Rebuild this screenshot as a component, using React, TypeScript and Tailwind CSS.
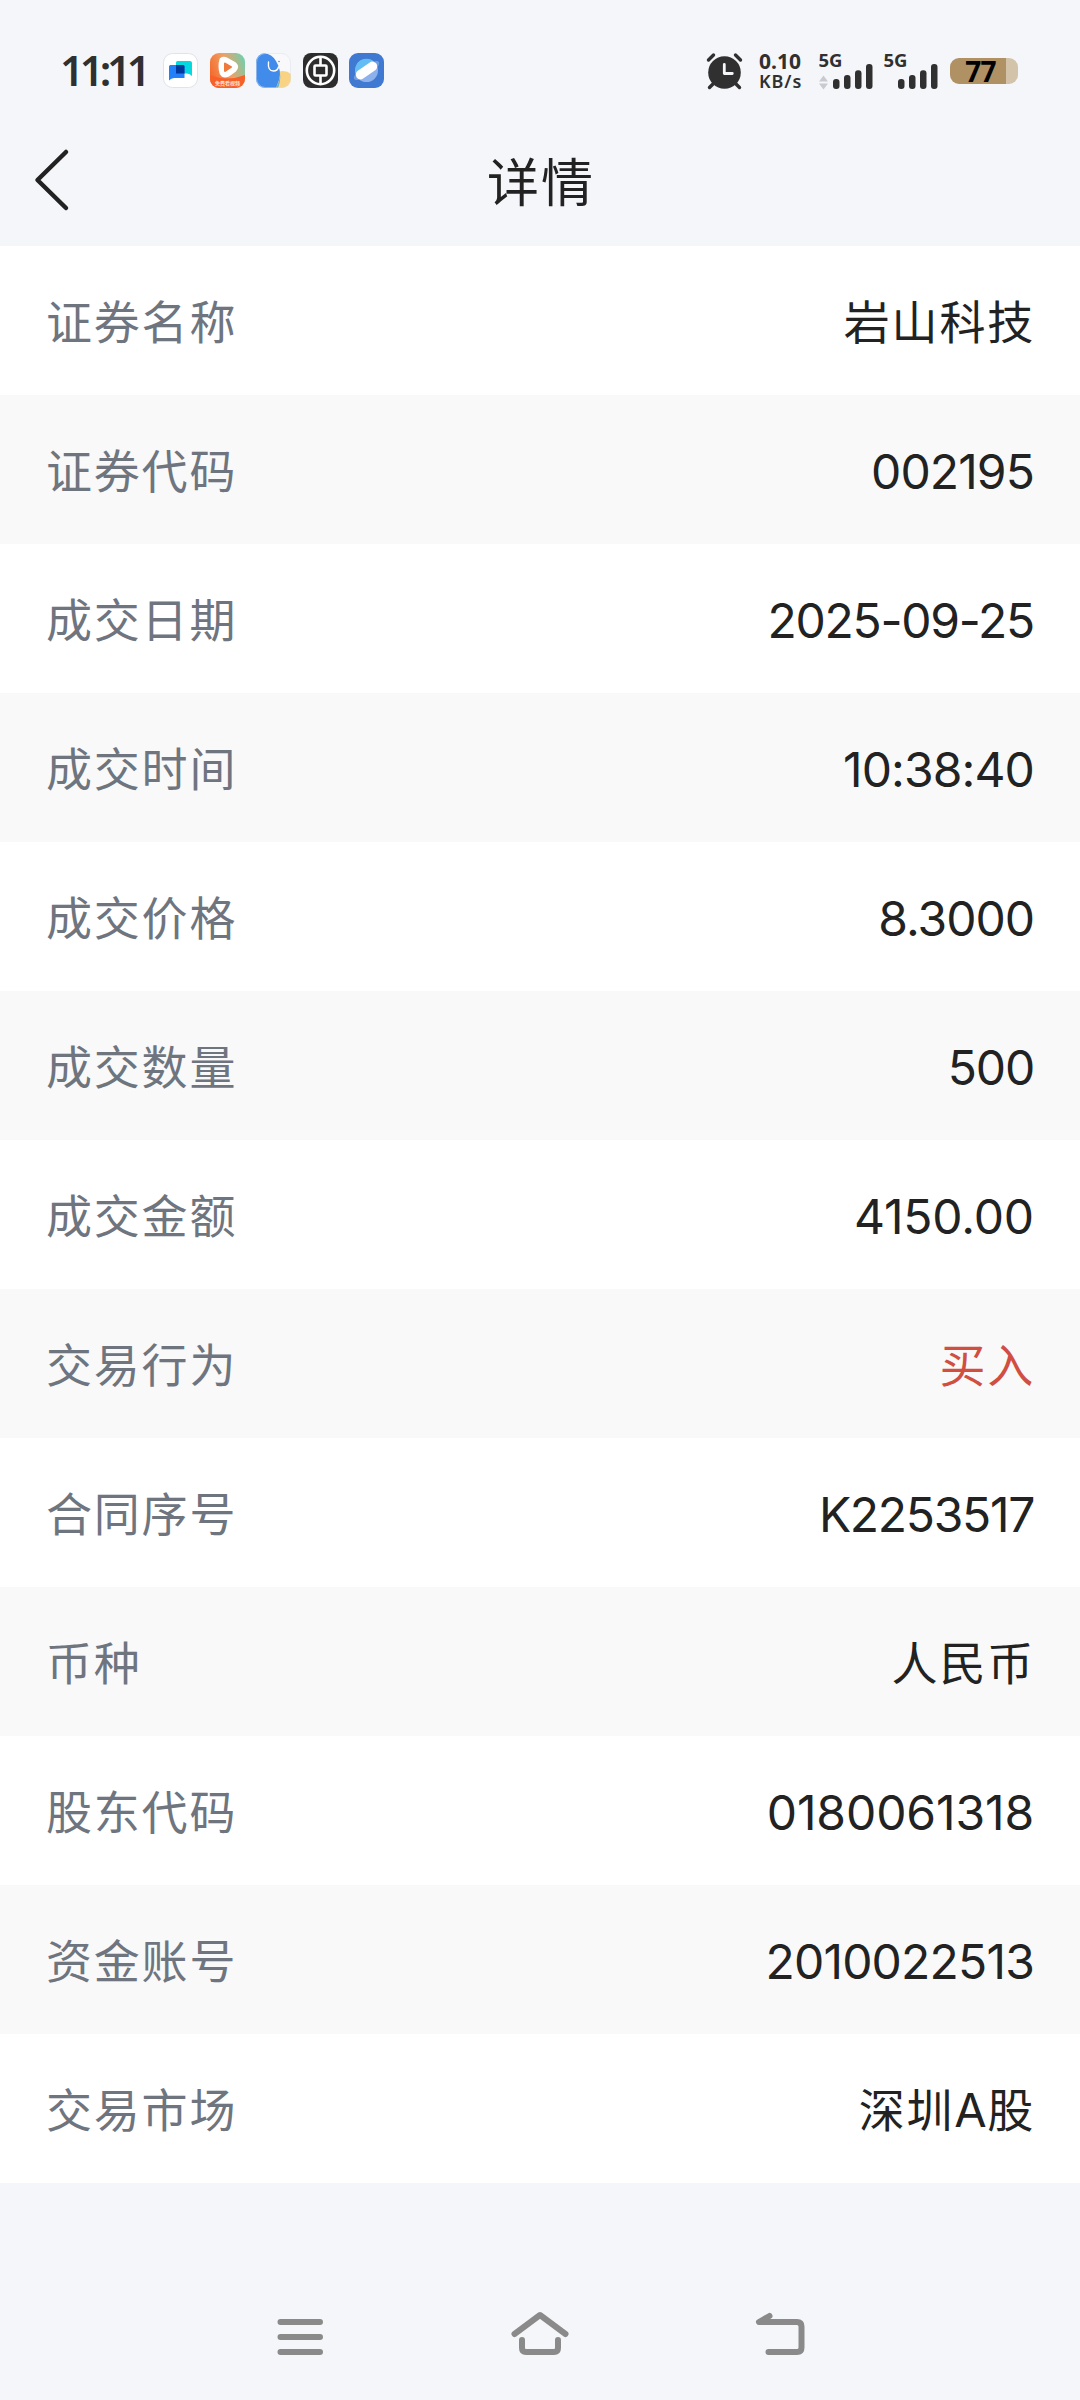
import React from "react";

const CJK = "font-['Noto_Sans_CJK_SC',sans-serif]";

const rows = [
  { label: "证券名称", value: "岩山科技" },
  { label: "证券代码", value: "002195", tracking: "tracking-[-0.9px]" },
  { label: "成交日期", value: "2025-09-25", tracking: "tracking-[-1.25px]" },
  { label: "成交时间", value: "10:38:40", tracking: "tracking-[-0.9px]" },
  { label: "成交价格", value: "8.3000", tracking: "tracking-[-1px]" },
  { label: "成交数量", value: "500", tracking: "tracking-[-1.2px]" },
  { label: "成交金额", value: "4150.00", tracking: "tracking-[-0.15px]" },
  { label: "交易行为", value: "买入", color: "text-[#d04f40]" },
  { label: "合同序号", value: "K2253517", tracking: "tracking-[-1.3px]" },
  { label: "币种", value: "人民币" },
  { label: "股东代码", value: "0180061318", tracking: "tracking-[-0.1px]" },
  { label: "资金账号", value: "2010022513", tracking: "tracking-[-0.8px]" },
  {
    label: "交易市场",
    value: (
      <>
        深圳<span className="font-['Inter',sans-serif] text-[47px] leading-none tracking-[0.5px]">A</span>股
      </>
    ),
  },
];

const ChatAppIcon = () => (
  <svg width="35" height="35" viewBox="0 0 35 35">
    <rect x="0.5" y="0.5" width="34" height="34" rx="9" fill="#fff" stroke="#e2e3e8" />
    <path d="M14.500 8H27q2 0 2 2v13q-2-2.500-5-2.500H13V9.500Q13 8 14.500 8z" fill="#04d9e0" />
    <path d="M7.500 12H20q1.500 0 1.500 1.500V25H11q-3 0-5 2.500V13.500Q6 12 7.500 12z" fill="#2380fb" />
    <path d="M13 12h7q1.500 0 1.500 1.500v7H13z" fill="#03379b" />
  </svg>
);

const VideoAppIcon = () => (
  <svg width="35" height="35" viewBox="0 0 35 35">
    <defs>
      <linearGradient id="video" x1="0" y1="0.6" x2="1" y2="0.2">
        <stop offset="0" stopColor="#f5692c" />
        <stop offset="0.5" stopColor="#efa064" />
        <stop offset="1" stopColor="#72cfae" />
      </linearGradient>
      <clipPath id="videoClip">
        <rect width="35" height="35" rx="9" />
      </clipPath>
    </defs>
    <g clipPath="url(#videoClip)">
      <rect width="35" height="35" fill="url(#video)" />
      <path d="M0 22q17 7 35 0v13H0z" fill="#f8602a" />
    </g>
    <path d="M11.500 6.500q2-1.500 5 0l8 4.500q3 3 0 6l-7 5q-4 1.500-6-2q-2-7 0-13.500z" fill="#fff" stroke="#fff" strokeWidth="4" strokeLinejoin="round" />
    <path d="M15 10.500l6 3.500-6 4z" fill="#ee7a3d" stroke="#ee7a3d" strokeWidth="2" strokeLinejoin="round" />
    <text x="17.500" y="32" textAnchor="middle" fontSize="5" fill="#ffe3cf" className="font-['Noto_Sans_CJK_SC',sans-serif] font-bold">免费看视频</text>
  </svg>
);

const ElephantAppIcon = () => (
  <svg width="35" height="35" viewBox="0 0 35 35">
    <defs>
      <clipPath id="elephantClip">
        <rect width="35" height="35" rx="9" />
      </clipPath>
    </defs>
    <g clipPath="url(#elephantClip)">
      <rect width="35" height="35" fill="#f9f9fb" />
      <circle cx="27" cy="30" r="12" fill="#f8d384" />
      <path d="M0 0h8q8 1 12 8q6 10 3 19l-3 8H0z" fill="#418bea" />
      <path d="M24 20q0 8-4 15h2q3-7 2-15z" fill="#58b1e0" />
      <path d="M0 7Q1 1 8 0H0z" fill="#f9f9fb" />
      <path d="M12.500 9q-1 9 5 9q4 0 5-4" fill="none" stroke="#fff" strokeWidth="1.400" strokeLinecap="round" />
      <circle cx="23" cy="8.500" r="0.800" fill="#418bea" />
    </g>
    <rect x="0.5" y="0.5" width="34" height="34" rx="9" fill="none" stroke="#d9dfea" strokeOpacity="0.5" />
  </svg>
);

const BankAppIcon = () => (
  <svg width="35" height="35" viewBox="0 0 35 35">
    <rect width="35" height="35" rx="8" fill="#2d2d2d" />
    <circle cx="17.500" cy="17.500" r="13.700" fill="none" stroke="#fff" strokeWidth="2.600" />
    <rect x="11.500" y="12.500" width="12" height="10" rx="1" fill="none" stroke="#fff" strokeWidth="2.600" />
    <path d="M17.500 4v8M17.500 23v8" stroke="#fff" strokeWidth="2.600" />
  </svg>
);

const BrowserAppIcon = () => (
  <svg width="35" height="35" viewBox="0 0 35 35">
    <rect width="35" height="35" rx="9" fill="#3f79d2" />
    <circle cx="17.500" cy="17.500" r="11.500" fill="#8db1ec" />
    <path d="M6.500 19Q6 8 15 6q7-1 11 4L8 23q-1.500-2-1.500-4z" fill="#62bdf5" />
    <ellipse cx="17.500" cy="17.500" rx="15" ry="5" transform="rotate(-35 17.500 17.500)" fill="#8db1ec" fillOpacity="0.65" />
    <rect x="5.500" y="12.800" width="24" height="9.400" rx="4.700" transform="rotate(-35 17.500 17.500)" fill="#fff" />
  </svg>
);

const AlarmIcon = () => (
  <svg width="38" height="38" viewBox="0 0 38 38">
    <g stroke="#303031" strokeWidth="3.400" strokeLinecap="round">
      <path d="M2.500 8L7.500 3M34.500 8L29.500 3M7 32l-3.500 3.500M30 32l3.500 3.500" />
    </g>
    <circle cx="18.500" cy="20.500" r="16.300" fill="#303031" />
    <path d="M18.300 12.500v9h8" fill="none" stroke="#f5f6fa" strokeWidth="2.800" strokeLinecap="round" strokeLinejoin="round" />
  </svg>
);

const Signal = ({ arrows = false }) => (
  <svg className="overflow-visible" width="56" height="38" viewBox="0 0 56 38">
    <text x="0.500" y="14.800" fontSize="18" textLength="24" lengthAdjust="spacingAndGlyphs" fill="#303031" className="font-['Noto_Sans',sans-serif] font-bold">5G</text>
    {arrows && <path d="M1 29.500L5.500 23.500 10 29.500zM1 31.500h9L5.500 37.500z" fill="#c9cacf" />}
    <g fill="#303031">
      <rect x="15" y="27" width="6.500" height="10" rx="3" />
      <rect x="26" y="23" width="6.500" height="14" rx="3" />
      <rect x="37" y="18.300" width="6.500" height="18.700" rx="3" />
      <rect x="48" y="12" width="6.500" height="25" rx="3" />
    </g>
  </svg>
);

const StatusBar = () => (
  <div className="flex h-[136px] items-start justify-between pt-[52px] pr-[62px] pl-[60px] text-[#303031]">
    <div className="flex items-center">
      <span className="w-[103px] font-['Noto_Sans',sans-serif] text-[42px] leading-[36px] font-semibold tracking-[-4.200px] whitespace-nowrap">11:11</span>
      <div className="flex gap-[11.600px] pt-px">
        <ChatAppIcon />
        <VideoAppIcon />
        <ElephantAppIcon />
        <BankAppIcon />
        <BrowserAppIcon />
      </div>
    </div>
    <div className="flex items-start">
      <AlarmIcon />
      <div className="ml-[15px] w-[59px] font-['Noto_Sans',sans-serif]">
        <div className="text-[21px] leading-[18px] font-bold">0.10</div>
        <div className="text-[18px] leading-[22px] font-semibold tracking-[0.9px]">KB/s</div>
      </div>
      <Signal arrows />
      <div className="ml-[9px]">
        <Signal />
      </div>
      <div className="mt-[6px] ml-[11px] flex h-[26px] w-[68px] items-center justify-center rounded-[9px] bg-[linear-gradient(90deg,#b09164_56px,#d3c3ab_56px)] pr-[7px] font-['Noto_Sans',sans-serif] text-[28px] leading-[26px] font-bold tracking-[-0.8px] text-black">
        77
      </div>
    </div>
  </div>
);

const Header = () => (
  <div className="grid h-[110px] grid-cols-3 items-start">
    <svg className="mt-[12px] ml-[34px]" width="36" height="64" viewBox="0 0 36 64">
      <path d="M32 4L3.500 32l28.500 28" fill="none" stroke="#222" strokeWidth="4.500" strokeLinecap="round" strokeLinejoin="round" />
    </svg>
    <h1 className="pt-[14px] pl-[2px] text-center text-[52px] leading-[60px] tracking-[2px] text-[#222]">详情</h1>
  </div>
);

const NavBar = () => (
  <div className="flex h-[217px] justify-between px-[272px] pt-[127px]">
    <svg width="56" height="54" viewBox="272 2310 56 54" fill="none" stroke="#8a8a8a" strokeWidth="6" strokeLinecap="round">
      <path d="M280.500 2322h39.500M280.500 2337h39.500M280.500 2352h39.500" />
    </svg>
    <svg width="60" height="54" viewBox="510 2310 60 54" fill="none" stroke="#8a8a8a" strokeWidth="6" strokeLinecap="round" strokeLinejoin="round">
      <path d="M514.500 2334L540 2315l25.500 19M522 2340v8q0 4 4 4h28q4 0 4-4v-8" />
    </svg>
    <svg width="56" height="54" viewBox="752 2310 56 54" fill="none" stroke="#8a8a8a" strokeWidth="6" strokeLinecap="round" strokeLinejoin="round">
      <path d="M769.500 2316L759 2322h38q4.500 0 4.500 4.500v21q0 4.500-4.500 4.500h-28.500" />
    </svg>
  </div>
);

const App = () => {
  return (
    <div className={`flex h-[2400px] w-[1080px] flex-col overflow-hidden bg-[#f5f6fa] ${CJK}`} lang="zh-CN">
      <StatusBar />
      <Header />
      <div>
        {rows.map((row) => (
          <div key={row.label} className="flex h-[149px] items-center justify-between bg-white pr-[45px] pl-[46px] even:bg-[#f9f9f9]">
            <span className="pb-[3px] text-[46px] leading-[60px] tracking-[1.8px] text-[#6f757f]">{row.label}</span>
            {row.tracking ? (
              <span className={`pt-[5px] pr-px font-['Inter',sans-serif] text-[48px] leading-[60px] text-[#222] ${row.tracking}`}>{row.value}</span>
            ) : (
              <span className={`pb-[3px] text-[46px] leading-[60px] tracking-[1.8px] ${row.color || "text-[#222]"}`}>{row.value}</span>
            )}
          </div>
        ))}
      </div>
      <NavBar />
    </div>
  );
};

export default App;
